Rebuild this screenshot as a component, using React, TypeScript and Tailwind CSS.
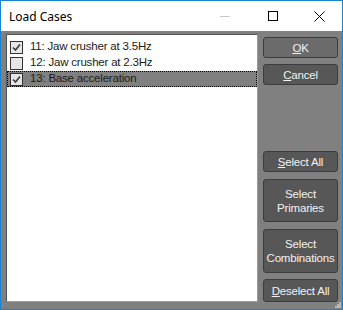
import React, { useState } from "react";

type Item = { id: number; label: string; checked: boolean };

const initial: Item[] = [
  { id: 11, label: "11: Jaw crusher at 3.5Hz", checked: true },
  { id: 12, label: "12: Jaw crusher at 2.3Hz", checked: false },
  { id: 13, label: "13: Base acceleration", checked: true },
];

function Check({ checked }: { checked: boolean }) {
  return (
    <span className="w-[13px] h-[13px] border border-[#333] bg-[#e6e6e6] flex items-center justify-center shrink-0">
      {checked && (
        <svg width="9" height="9" viewBox="0 0 9 9">
          <path d="M1 4.5 L3.5 7 L8 1.5" fill="none" stroke="#3a3a3a" strokeWidth="1.6" />
        </svg>
      )}
    </span>
  );
}

function Btn({ children, light, h }: { children: React.ReactNode; light?: boolean; h: string }) {
  return (
    <button
      className={
        "w-[75px] rounded-[3px] border border-[#3c3c3c] text-[#f2f2f2] text-[11.5px] tracking-[-0.2px] leading-[14px] flex flex-col items-center justify-center " +
        h +
        (light ? " bg-[#6b6b6b]" : " bg-[#575757]")
      }
    >
      {children}
    </button>
  );
}

export default function App() {
  const [items, setItems] = useState(initial);
  const [selected, setSelected] = useState(13);

  return (
    <div
      className="w-[343px] h-[310px] border border-[#1883d7] flex flex-col bg-[#808080]"
      style={{ fontFamily: '"Liberation Sans", Arial, sans-serif' }}
    >
      {/* Title bar */}
      <div className="h-[30px] bg-white flex items-center shrink-0">
        <span className="pl-[8px] pt-[2px] text-[12px] text-black flex-1" style={{ fontFamily: '"Noto Sans", sans-serif' }}>
          Load Cases
        </span>
        <div className="w-[46px] h-full flex items-center justify-center">
          <span className="w-[10px] h-px bg-[#c8c8c8] mr-[4px]" />
        </div>
        <div className="w-[46px] h-full flex items-center justify-center">
          <span className="w-[10px] h-[10px] border border-black" />
        </div>
        <div className="w-[46px] h-full flex items-center justify-center">
          <svg width="11" height="11" viewBox="0 0 11 11">
            <path d="M0.5 0.5 L10.5 10.5 M10.5 0.5 L0.5 10.5" stroke="black" strokeWidth="1" />
          </svg>
        </div>
      </div>

      {/* Body */}
      <div className="flex flex-1 pl-[5px] pr-[4px] pt-[3px] pb-[7px] gap-[5px]">
        <div className="w-[252px] bg-white border-t border-l border-[#555] border-r border-r-[#9a9a9a] border-b border-b-[#9a9a9a] pt-[4px]">
          {items.map((it) => (
            <div
              key={it.id}
              onClick={() => setSelected(it.id)}
              className={
                "h-[16px] flex items-center gap-[7px] pl-[3px] text-[11.5px] tracking-[-0.2px] text-[#1a1a1a] " +
                (selected === it.id ? "bg-[#808080] outline outline-1 outline-dotted outline-offset-[-1px] outline-black" : "")
              }
            >
              <span
                onClick={(e) => {
                  e.stopPropagation();
                  setItems(items.map((x) => (x.id === it.id ? { ...x, checked: !x.checked } : x)));
                }}
              >
                <Check checked={it.checked} />
              </span>
              <span>{it.label}</span>
            </div>
          ))}
        </div>

        <div className="flex flex-col pt-[3px] relative">
          <div className="flex flex-col gap-[6px]">
            <Btn light h="h-[21px]">
              <span><u>O</u>K</span>
            </Btn>
            <Btn h="h-[21px]">
              <span><u>C</u>ancel</span>
            </Btn>
          </div>
          <div className="flex-1" />
          <div className="flex flex-col">
            <Btn h="h-[21px]">
              <span><u>S</u>elect All</span>
            </Btn>
            <div className="h-[7px]" />
            <Btn h="h-[43px]">
              <span>Select</span>
              <span>Primaries</span>
            </Btn>
            <div className="h-[7px]" />
            <Btn h="h-[44px]">
              <span>Select</span>
              <span>Combinations</span>
            </Btn>
            <div className="h-[6px]" />
            <Btn h="h-[23px]">
              <span><u>D</u>eselect All</span>
            </Btn>
          </div>
          <svg className="absolute right-[-3px] bottom-[-6px]" width="6" height="6" viewBox="0 0 6 6">
            <rect x="4" y="0" width="2" height="2" fill="#b8b8b8" />
            <rect x="2" y="2" width="2" height="2" fill="#b8b8b8" />
            <rect x="4" y="2" width="2" height="2" fill="#b8b8b8" />
            <rect x="0" y="4" width="2" height="2" fill="#b8b8b8" />
            <rect x="2" y="4" width="2" height="2" fill="#b8b8b8" />
            <rect x="4" y="4" width="2" height="2" fill="#b8b8b8" />
          </svg>
        </div>
      </div>
    </div>
  );
}
